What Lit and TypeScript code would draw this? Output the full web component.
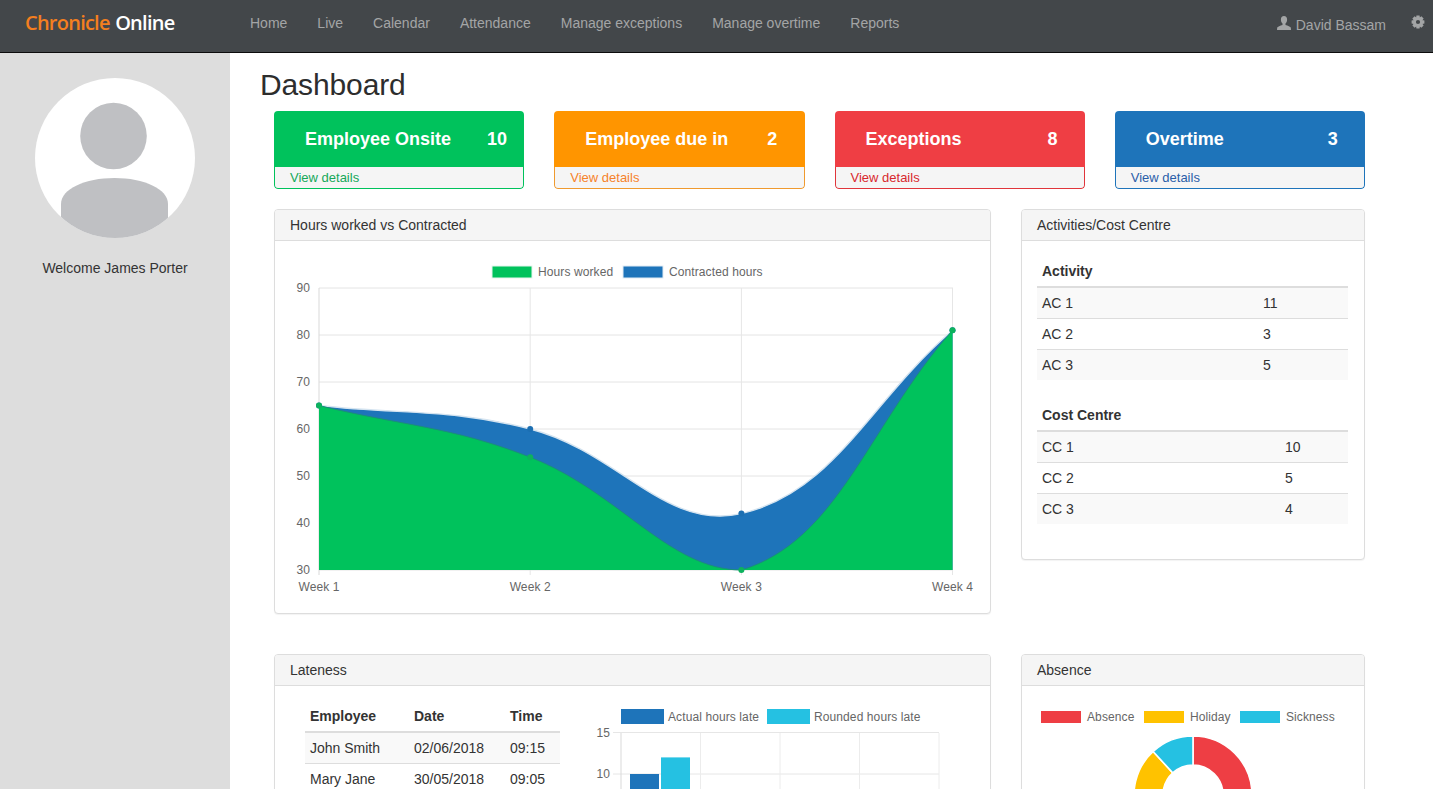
import { LitElement, html, css, svg } from "lit";
import { customElement } from "lit/decorators.js";

type Pt = [number, number];

const PLOT = { left: 319, right: 952.5, top: 288, bottom: 570 };
const capX = (v: number) => Math.min(PLOT.right, Math.max(PLOT.left, v));
const capY = (v: number) => Math.min(PLOT.bottom, Math.max(PLOT.top, v));

function spline(points: Pt[], t = 0.4): string {
  let d = `M${points[0][0]} ${points[0][1]}`;
  const cps = points.map((p, i) => {
    const prev = points[Math.max(i - 1, 0)];
    const next = points[Math.min(i + 1, points.length - 1)];
    const d01 = Math.hypot(p[0] - prev[0], p[1] - prev[1]);
    const d12 = Math.hypot(next[0] - p[0], next[1] - p[1]);
    const total = d01 + d12 || 1;
    const fa = (t * d01) / total;
    const fb = (t * d12) / total;
    return {
      before: [capX(p[0] - fa * (next[0] - prev[0])), capY(p[1] - fa * (next[1] - prev[1]))],
      after: [capX(p[0] + fb * (next[0] - prev[0])), capY(p[1] + fb * (next[1] - prev[1]))],
    };
  });
  for (let i = 1; i < points.length; i++) {
    const a = cps[i - 1].after;
    const b = cps[i].before;
    d += ` C${a[0].toFixed(2)} ${a[1].toFixed(2)} ${b[0].toFixed(2)} ${b[1].toFixed(2)} ${points[i][0]} ${points[i][1]}`;
  }
  return d;
}

const WEEK_X = [319, 530.2, 741.4, 952.5];
const yHours = (v: number) => 570 - (v - 30) * 4.7;
const green = [65, 54, 30, 81].map((v, i) => [WEEK_X[i], yHours(v)] as Pt);
const blue = [65, 60, 42, 81].map((v, i) => [WEEK_X[i], yHours(v)] as Pt);

function gearPath(cx: number, cy: number): string {
  const teeth = 8;
  const outer = 6.6;
  const root = 4.7;
  const pts: string[] = [];
  for (let i = 0; i < teeth; i++) {
    const base = (i * 2 * Math.PI) / teeth - Math.PI / 2;
    const w = 0.24;
    const seq: [number, number][] = [
      [root, base - 0.42],
      [outer, base - w],
      [outer, base + w],
      [root, base + 0.42],
    ];
    for (const [r, a] of seq) {
      pts.push(`${(cx + r * Math.cos(a)).toFixed(2)} ${(cy + r * Math.sin(a)).toFixed(2)}`);
    }
  }
  const hole = 2.1;
  return `M${pts.join("L")}Z M${cx + hole} ${cy}A${hole} ${hole} 0 1 0 ${cx - hole} ${cy}A${hole} ${hole} 0 1 0 ${cx + hole} ${cy}Z`;
}

function donutSlice(cx: number, cy: number, R: number, r: number, from: number, to: number): string {
  const pt = (rad: number, f: number) => {
    const a = f * 2 * Math.PI - Math.PI / 2;
    return `${(cx + rad * Math.cos(a)).toFixed(2)} ${(cy + rad * Math.sin(a)).toFixed(2)}`;
  };
  const large = to - from > 0.5 ? 1 : 0;
  return `M${pt(R, from)}A${R} ${R} 0 ${large} 1 ${pt(R, to)}L${pt(r, to)}A${r} ${r} 0 ${large} 0 ${pt(r, from)}Z`;
}

const STATS = [
  { cls: "green", title: "Employee Onsite", n: 10 },
  { cls: "orange", title: "Employee due in", n: 2 },
  { cls: "red", title: "Exceptions", n: 8 },
  { cls: "blue", title: "Overtime", n: 3 },
];
const NAV = ["Home", "Live", "Calendar", "Attendance", "Manage exceptions", "Manage overtime", "Reports"];

@customElement("app-root")
export class AppRoot extends LitElement {
  static styles = css`
    :host {
      display: flex;
      flex-direction: column;
      height: 100vh;
      overflow: hidden;
      font-family: "Liberation Sans", Arial, sans-serif;
      font-size: 14px;
      line-height: 20px;
      color: #333;
      background: #fff;
    }
    .nav {
      flex: none;
      display: flex;
      align-items: center;
      padding: 0 8px 6px 25px;
      box-sizing: border-box;
      background: #43474a;
      border-bottom: 1px solid #0c0c0c;
      height: 53px;
    }
    .logo {
      width: 225px;
      flex: none;
      font-family: "Open Sans", sans-serif;
      font-weight: 600;
      font-size: 20px;
      letter-spacing: -0.76px;
      word-spacing: 1px;
      color: #fff;
    }
    .logo span { color: #f47f1f; }
    .links { display: flex; gap: 30px; color: #a3a5a6; }
    .right {
      margin-left: auto;
      display: flex;
      align-items: center;
      color: #a3a5a6;
    }
    .name { margin: 3px 25px 0 5px; }
    .right svg { display: block; }
    .gear { margin-top: -3px; }
    .body { flex: 1; min-height: 0; display: flex; }
    .side {
      flex: none;
      width: 230px;
      background: #ddd;
      padding-top: 25px;
      text-align: center;
    }
    .side svg { display: block; margin: 0 auto 20px; }
    .main {
      flex: 1;
      min-width: 0;
      padding: 15px 68px 0 30px;
      overflow: hidden;
    }
    h1 {
      margin: 0 0 9px;
      font-weight: 400;
      font-size: 30px;
      line-height: 34px;
      letter-spacing: -0.12px;
      color: #2d2d2d;
    }
    .content { margin-left: 14px; }
    .stats {
      display: grid;
      grid-template-columns: repeat(4, 1fr);
      gap: 30px;
      margin-bottom: 20px;
    }
    .stat { border-radius: 4px; overflow: hidden; }
    .stat-head {
      height: 56px;
      box-sizing: border-box;
      padding-left: 31px;
      display: flex;
      align-items: center;
      color: #fff;
      font-weight: 700;
      font-size: 18px;
    }
    .stat-title { width: 182px; flex: none; }
    .stat-foot {
      height: 22px;
      box-sizing: border-box;
      padding-left: 15px;
      background: #f5f5f5;
      border: 1px solid;
      border-top: 0;
      border-radius: 0 0 4px 4px;
      font-size: 13px;
      line-height: 21px;
    }
    .green .stat-head { background: #00c25c; }
    .green .stat-foot { border-color: #00c25c; color: #16a85a; }
    .orange .stat-head { background: #ff9500; }
    .orange .stat-foot { border-color: #ef9a2f; color: #f5822a; }
    .red .stat-head { background: #ef3e44; }
    .red .stat-foot { border-color: #e0353b; color: #d8282e; }
    .blue .stat-head { background: #1e74ba; }
    .blue .stat-foot { border-color: #1e74ba; color: #2a5ea8; }
    .grid {
      display: grid;
      grid-template-columns: 717px 344px;
      gap: 40px 30px;
      align-items: start;
      justify-content: space-between;
    }
    .panel {
      border: 1px solid #ddd;
      border-radius: 4px;
      box-shadow: 0 1px 1px rgba(0, 0, 0, 0.05);
      background: #fff;
    }
    .panel-head {
      padding: 5px 15px;
      background: #f5f5f5;
      border-bottom: 1px solid #ddd;
      border-radius: 3px 3px 0 0;
      color: #333;
    }
    .panel svg { display: block; }
    .pad { padding: 15px 16px 15px 15px; }
    .late {
      display: flex;
      align-items: flex-start;
      gap: 20px;
      padding: 15px 0 15px 30px;
    }
    table {
      border-collapse: collapse;
      border-spacing: 0;
      width: 100%;
      margin-bottom: 20px;
      table-layout: fixed;
    }
    .late table { width: 255px; flex: none; }
    th, td { padding: 5px; text-align: left; line-height: 20px; }
    th { border-bottom: 2px solid #ddd; font-weight: 700; }
    td { border-top: 1px solid #ddd; }
    tbody tr:first-child td { border-top: 0; }
    tbody tr:nth-child(odd) { background: #f9f9f9; }
    .c-activity { width: 211px; }
    .c-centre { width: 233px; }
    .c-emp { width: 94px; }
    .c-date { width: 86px; }
    .chart-text {
      font-family: "Liberation Sans", Arial, sans-serif;
      font-size: 12px;
      letter-spacing: 0.1px;
      fill: #666;
    }
  `;

  private hoursChart() {
    const ys = [90, 80, 70, 60, 50, 40, 30];
    const greenLine = spline(green);
    const blueLine = spline(blue);
    const area = (d: string) => `${d} L952.5 570 L319 570 Z`;
    return html`<svg width="715" height="372" viewBox="275 241 715 372">
      ${ys.map(
        (v) => svg`<line x1="319" x2="953" y1=${yHours(v)} y2=${yHours(v)} stroke="#e4e4e4"></line>
        <text class="chart-text" x="310" y=${yHours(v) + 4} text-anchor="end">${v}</text>`
      )}
      ${WEEK_X.map(
        (x, i) => svg`<line x1=${x} x2=${x} y1="288" y2="575" stroke=${i === 0 ? "#d9d9d9" : "#e6e6e6"}></line>
        <text class="chart-text" x=${x} y="591" text-anchor="middle">Week ${i + 1}</text>`
      )}
      <rect x="492" y="266" width="40" height="12" fill="#00c25c" stroke="#e6f6ee" stroke-width="1"></rect>
      <text class="chart-text" x="538" y="276">Hours worked</text>
      <rect x="623" y="266" width="40" height="12" fill="#1e74ba" stroke="#e1ecf5" stroke-width="1"></rect>
      <text class="chart-text" x="669" y="276">Contracted hours</text>
      <path d=${area(blueLine)} fill="#1e74ba"></path>
      <path d=${blueLine} fill="none" stroke="#d5e4f0" stroke-width="1.4"></path>
      ${blue.map((p) => svg`<circle cx=${p[0]} cy=${p[1]} r="3" fill="#1c6fb2"></circle>`)}
      <path d=${area(greenLine)} fill="#00c25c"></path>
      <path d=${greenLine} fill="none" stroke="#1a8f7a" stroke-width="1"></path>
      ${green.map((p) => svg`<circle cx=${p[0]} cy=${p[1]} r="3" fill="#0db25d"></circle>`)}
    </svg>`;
  }

  private lateChart() {
    const y = (v: number) => 857 - v * 8.3;
    const xs = [621, 700.5, 780, 859.5, 939];
    return html`<svg width="410" height="170" viewBox="580 701 410 170">
      ${[15, 10, 5, 0].map(
        (v) => svg`<line x1="613" x2="939" y1=${y(v)} y2=${y(v)} stroke="#e6e6e6"></line>`
      )}
      ${[15, 10].map(
        (v) => svg`<text class="chart-text" x="610" y=${y(v) + 4} text-anchor="end">${v}</text>`
      )}
      ${xs.map((x, i) => svg`<line x1=${x} x2=${x} y1="733" y2="857" stroke=${i === 0 ? "#d9d9d9" : "#ececec"}></line>`)}
      <rect x="621" y="709" width="43" height="15" fill="#1e74ba"></rect>
      <text class="chart-text" x="668" y="721">Actual hours late</text>
      <rect x="767" y="709" width="43" height="15" fill="#25c1e2"></rect>
      <text class="chart-text" x="814" y="721">Rounded hours late</text>
      <rect x="630" y=${y(10)} width="29" height=${10 * 8.3} fill="#1e74ba"></rect>
      <rect x="661" y=${y(12)} width="29" height=${12 * 8.3} fill="#25c1e2"></rect>
    </svg>`;
  }

  private donut() {
    const slices = [
      { from: 0, to: 0.5, fill: "#ee3e44" },
      { from: 0.5, to: 0.882, fill: "#ffc200" },
      { from: 0.882, to: 1, fill: "#25c1e2" },
    ];
    return html`<svg width="312" height="160" viewBox="1037 701 312 160">
      <rect x="1041" y="711" width="40" height="12" fill="#ee3e44"></rect>
      <text class="chart-text" x="1087" y="721">Absence</text>
      <rect x="1144" y="711" width="40" height="12" fill="#ffc200"></rect>
      <text class="chart-text" x="1190" y="721">Holiday</text>
      <rect x="1240" y="711" width="40" height="12" fill="#25c1e2"></rect>
      <text class="chart-text" x="1286" y="721">Sickness</text>
      ${slices.map(
        (s) => svg`<path d=${donutSlice(1193, 795, 59, 30, s.from, s.to)} fill=${s.fill} stroke="#fff" stroke-width="1.6"></path>`
      )}
    </svg>`;
  }

  private costTable(heading: string, cls: string, rows: [string, number][]) {
    return html`<table>
      <thead><tr><th class=${cls}>${heading}</th><th></th></tr></thead>
      <tbody>${rows.map((r) => html`<tr><td>${r[0]}</td><td>${r[1]}</td></tr>`)}</tbody>
    </table>`;
  }

  render() {
    return html`
      <header class="nav">
        <div class="logo"><span>Chronicle</span> Online</div>
        <nav class="links">${NAV.map((n) => html`<div>${n}</div>`)}</nav>
        <div class="right">
          <svg width="14" height="14" viewBox="0 0 14 14" fill="#a3a5a6">
            <path d="M7 0C5 0 3.9 1.5 3.9 3.5 3.9 5.2 4.6 6.8 5.5 7.6V8.9C3.2 9.7.6 10.5.2 11.6L0 14H14L13.8 11.6C13.4 10.5 10.8 9.7 8.5 8.9V7.6C9.4 6.8 10.1 5.2 10.1 3.5 10.1 1.5 9 0 7 0Z"></path>
          </svg>
          <div class="name">David Bassam</div>
          <svg class="gear" width="14" height="14" viewBox="0 0 14 14" fill="#a3a5a6">
            <path fill-rule="evenodd" d=${gearPath(7, 7)}></path>
          </svg>
        </div>
      </header>
      <div class="body">
        <aside class="side">
          <svg width="160" height="160" viewBox="35 78 160 160">
            <defs><clipPath id="av"><circle cx="115" cy="158" r="80"></circle></clipPath></defs>
            <circle cx="115" cy="158" r="80" fill="#fff"></circle>
            <circle cx="113.5" cy="136" r="33.3" fill="#bfc0c3"></circle>
            <path clip-path="url(#av)" fill="#bfc0c3" d="M61 240V204C61 189 85 178 114.5 178S168 189 168 204V240Z"></path>
          </svg>
          <div>Welcome James Porter</div>
        </aside>
        <main class="main">
          <h1>Dashboard</h1>
          <div class="content">
            <section class="stats">
              ${STATS.map(
                (s) => html`<div class="stat ${s.cls}">
                  <div class="stat-head"><span class="stat-title">${s.title}</span><span>${s.n}</span></div>
                  <div class="stat-foot">View details</div>
                </div>`
              )}
            </section>
            <section class="grid">
              <div class="panel">
                <div class="panel-head">Hours worked vs Contracted</div>
                ${this.hoursChart()}
              </div>
              <div class="panel">
                <div class="panel-head">Activities/Cost Centre</div>
                <div class="pad">
                  ${this.costTable("Activity", "c-activity", [["AC 1", 11], ["AC 2", 3], ["AC 3", 5]])}
                  ${this.costTable("Cost Centre", "c-centre", [["CC 1", 10], ["CC 2", 5], ["CC 3", 4]])}
                </div>
              </div>
              <div class="panel">
                <div class="panel-head">Lateness</div>
                <div class="late">
                  <table>
                    <thead><tr><th class="c-emp">Employee</th><th class="c-date">Date</th><th>Time</th></tr></thead>
                    <tbody>
                      <tr><td>John Smith</td><td>02/06/2018</td><td>09:15</td></tr>
                      <tr><td>Mary Jane</td><td>30/05/2018</td><td>09:05</td></tr>
                    </tbody>
                  </table>
                  ${this.lateChart()}
                </div>
              </div>
              <div class="panel">
                <div class="panel-head">Absence</div>
                <div class="pad">${this.donut()}</div>
              </div>
            </section>
          </div>
        </main>
      </div>
    `;
  }
}
